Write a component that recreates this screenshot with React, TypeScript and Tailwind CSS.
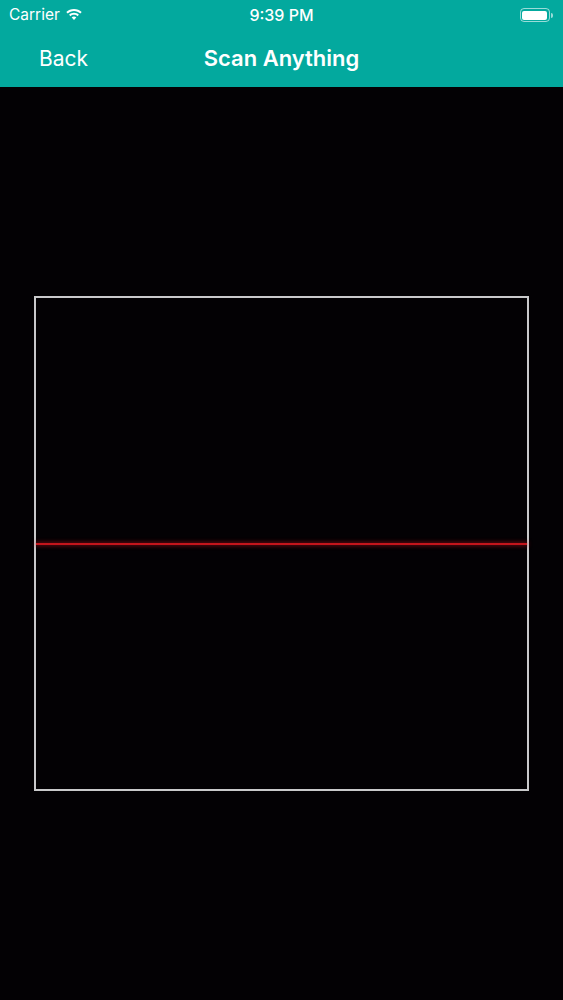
import React from 'react';

const Wifi: React.FC = () => (
  <svg width="16" height="12" viewBox="0 0 16 12" fill="white">
    <path d="M8 0C5 0 2.3 1.1 0.3 3l1.4 1.5C3.4 2.9 5.6 2 8 2s4.6.9 6.3 2.5L15.7 3C13.7 1.1 11 0 8 0z" />
    <path d="M8 3.8c-1.9 0-3.6.7-4.9 1.9l1.4 1.5C5.4 6.3 6.6 5.8 8 5.8s2.6.5 3.5 1.4l1.4-1.5C11.6 4.5 9.9 3.8 8 3.8z" />
    <path d="M8 7.6c-.9 0-1.7.3-2.3.9L8 11l2.3-2.5c-.6-.6-1.4-.9-2.3-.9z" />
  </svg>
);

const Battery: React.FC = () => (
  <div className="flex items-center gap-[1px]">
    <div className="w-[30px] h-[14px] rounded-[4px] border border-white/60 p-[1.5px]">
      <div className="w-full h-full rounded-[2px] bg-white" />
    </div>
    <div className="w-[2px] h-[5px] rounded-r-sm bg-white/60" />
  </div>
);

export default function App() {
  return (
    <div
      className="w-[563px] h-[1000px] bg-[#030104] flex flex-col"
      style={{ fontFamily: 'Inter, "Liberation Sans", sans-serif' }}
    >
      <header className="bg-[#03a99e] text-white h-[87px] flex flex-col">
        <div className="h-[30px] px-[9px] flex items-center justify-between text-[15.5px]">
          <div className="flex items-center gap-[6px] w-[120px]">
            <span>Carrier</span>
            <Wifi />
          </div>
          <span className="font-medium text-[16px]">9:39 PM</span>
          <div className="flex justify-end w-[120px] pr-[1px]">
            <Battery />
          </div>
        </div>
        <div className="flex-1 relative flex items-center">
          <span className="pl-[39px] text-[21px]">Back</span>
          <span className="absolute left-0 right-0 text-center text-[22px] font-semibold pointer-events-none">
            Scan Anything
          </span>
        </div>
      </header>

      <main className="flex-1 flex flex-col items-center pt-[209px]">
        <div className="w-[495px] h-[495px] border-2 border-[#c9c9cb] flex flex-col">
          <div className="h-[245px]" />
          <div className="h-[2px] bg-[#c4151c] shadow-[0_0_4px_1px_rgba(200,20,30,0.5)]" />
        </div>
      </main>
    </div>
  );
}
